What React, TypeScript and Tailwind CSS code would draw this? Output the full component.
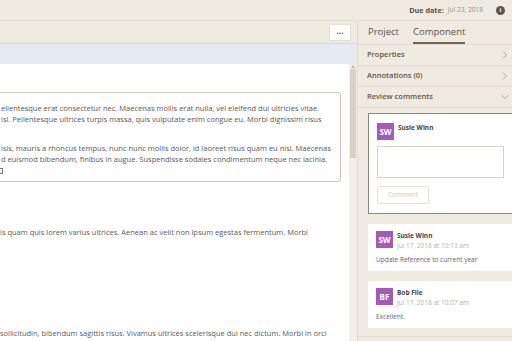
import React from 'react';
import { ChevronRight, ChevronDown } from 'lucide-react';

const lines1 = [
  'ellentesque erat consectetur nec. Maecenas mollis erat nulla, vel eleifend dui ultricies vitae.',
  'isl. Pellentesque ultrices turpis massa, quis vulputate enim congue eu. Morbi dignissim risus',
];
const lines2 = [
  'isis, mauris a rhoncus tempus, nunc nunc mollis dolor, id laoreet risus quam eu nisl. Maecenas',
  'd euismod bibendum, finibus in augue. Suspendisse sodales condimentum neque nec lacinia.',
];

const Avatar = ({ initials }: { initials: string }) => (
  <div className="w-[17px] h-[17px] bg-[#a35bb6] text-white text-[8px] font-bold flex items-center justify-center">
    {initials}
  </div>
);

const CommentCard = ({ initials, name, date, text }: { initials: string; name: string; date: string; text: string }) => (
  <div className="bg-white h-[47px] pl-[8px] pt-[7px]">
    <div className="flex gap-[4px]">
      <Avatar initials={initials} />
      <div className="leading-[10px]">
        <div className="text-[6.5px] font-bold text-[#4a4339]">{name}</div>
        <div className="text-[6.5px] text-[#b9b2a6]">{date}</div>
      </div>
    </div>
    <div className="text-[6.5px] text-[#666] mt-[4px]">{text}</div>
  </div>
);

const Row = ({ label, open }: { label: string; open?: boolean }) => (
  <div className="h-[21px] border-b border-[#e2ddd0] flex items-center justify-between pl-[9px] pr-[1px] text-[7.5px] font-semibold text-[#5e574c]">
    <span>{label}</span>
    {open ? <ChevronDown size={12} strokeWidth={1.2} className="text-[#777]" /> : <ChevronRight size={12} strokeWidth={1.2} className="text-[#777]" />}
  </div>
);

export default function App() {
  return (
    <div className="w-[512px] h-[341px] overflow-hidden flex flex-col bg-[#efebe0] font-['Open_Sans',sans-serif]">
      <div className="h-[21px] border-b border-[#e3dfd3] flex items-center justify-end pr-[7px] gap-[4px]">
        <span className="text-[7.2px] font-bold text-[#5a5247]">Due date:</span>
        <span className="text-[6.6px] text-[#9a9286]">Jul 23, 2018</span>
        <span className="ml-[9px] w-[9px] h-[9px] rounded-full bg-[#5b554c] text-white text-[6px] font-bold flex items-center justify-center">i</span>
      </div>
      <div className="flex flex-1 min-h-0">
        <div className="w-[357px] flex flex-col">
          <div className="h-[23px] border-b border-[#dcd8cc] flex items-center justify-end pr-[6px]">
            <div className="w-[22px] h-[17px] bg-white rounded-[2px] border border-[#e4e0d6] flex items-center justify-center text-[8px] font-bold text-[#555] leading-none pb-[3px]">
              ...
            </div>
          </div>
          <div className="h-[20px] bg-[#e3eaf1] mr-[2px]" />
          <div className="flex flex-1 min-h-0">
            <div className="flex-1 bg-white overflow-hidden text-[7.5px] text-[#5a5a5a] leading-[11px] whitespace-nowrap">
              <div className="mt-[28px] -ml-[4px] w-[345px] h-[90px] border border-[#c9c6c0] rounded-[3px] bg-[#fefefe] pl-[4px] pt-[10px]">
                {lines1.map((l) => <div key={l}>{l}</div>)}
                <div className="h-[18px]" />
                {lines2.map((l) => <div key={l}>{l}</div>)}
                <div className="w-[4px] h-[6px] border border-[#777] -ml-[2px] mt-[3px]" />
              </div>
              <div className="mt-[45px]">is quam quis lorem varius ultrices. Aenean ac velit non ipsum egestas fermentum. Morbi</div>
              <div className="mt-[90px]">sollicitudin, bibendum sagittis risus. Vivamus ultrices scelerisque dui nec dictum. Morbi in orci</div>
            </div>
            <div className="w-[8px] bg-[#f1eee6] flex flex-col items-center">
              <div className="w-0 h-0 border-l-[2px] border-r-[2px] border-b-[3px] border-transparent border-b-[#bbb] mt-[1px]" />
              <div className="w-[6px] h-[89px] bg-[#d6d1c4] mt-[1px]" />
            </div>
          </div>
        </div>
        <div className="flex-1 flex flex-col border-l border-[#e0dbcf]">
          <div className="h-[23px] flex items-end gap-[14px] pl-[10px] text-[9.5px] text-[#5a5247]">
            <span className="pb-[5px]">Project</span>
            <span className="pb-[3px] border-b-2 border-[#6d665b]">Component</span>
          </div>
          <div className="border-t border-[#e2ddd0]">
            <Row label="Properties" />
            <Row label="Annotations (0)" />
            <Row label="Review comments" open />
          </div>
          <div className="pl-[10px] pt-[5px] flex flex-col gap-[10px]">
            <div className="h-[101px] bg-white border border-[#8a857c] border-r-0 pl-[8px] pt-[9px]">
              <div className="flex gap-[4px]">
                <Avatar initials="SW" />
                <div className="text-[6.5px] font-bold text-[#4a4339] leading-[10px]">Susie Winn</div>
              </div>
              <div className="mt-[6px] w-[127px] h-[32px] border border-[#d6d3cd]" />
              <div className="mt-[8px] w-[52px] h-[18px] border border-[#e3e0da] rounded-[2px] flex items-center justify-center text-[6.5px] text-[#cfcac0]">
                Comment
              </div>
            </div>
            <CommentCard initials="SW" name="Susie Winn" date="Jul 17, 2018 at 10:13 am" text="Update Reference to current year" />
            <CommentCard initials="BF" name="Bob File" date="Jul 17, 2018 at 10:07 am" text="Excellent." />
            <div className="border-t border-[#e0dbcf] -ml-[10px] mt-[-2px]" />
          </div>
        </div>
      </div>
    </div>
  );
}
